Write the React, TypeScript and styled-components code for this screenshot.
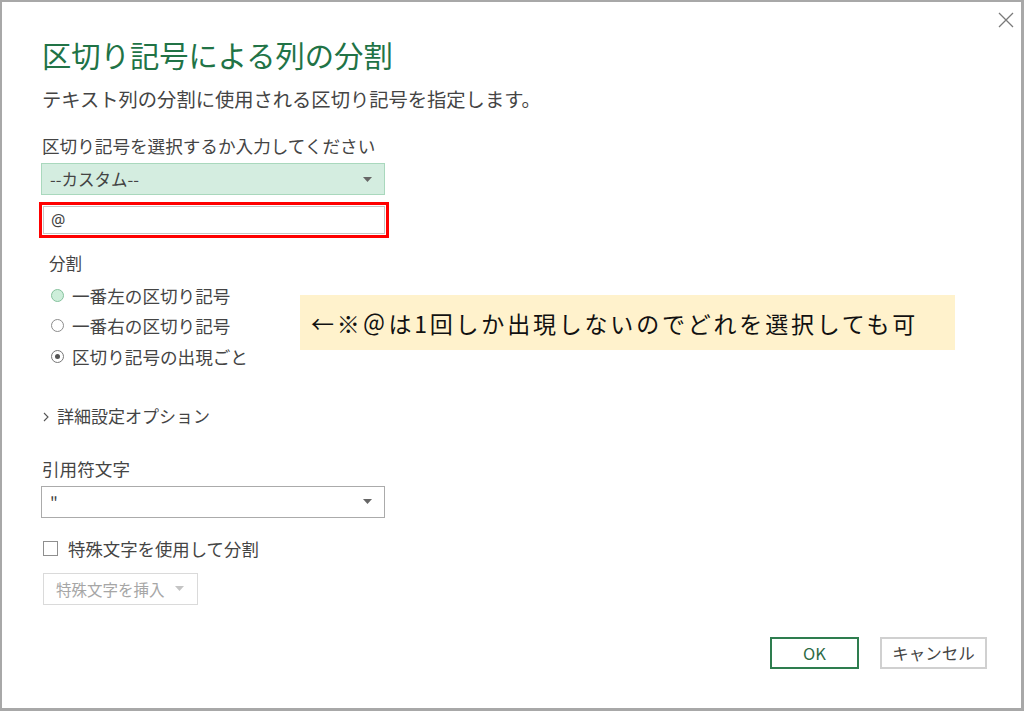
import styled, { createGlobalStyle } from 'styled-components';

const GlobalStyle = createGlobalStyle`
  html, body {
    margin: 0;
    padding: 0;
    background: #ffffff;
  }
  body {
    font-family: 'Noto Sans CJK JP', 'Noto Sans', sans-serif;
    color: #444444;
  }
`;

const FONT = `'Noto Sans CJK JP', 'Noto Sans', sans-serif`;

const ArrowDown = ({ color = '#666666' }: { color?: string }) => (
  <svg width="9" height="5" viewBox="0 0 9 5">
    <path d="M0 0 H9 L4.5 5 Z" fill={color} />
  </svg>
);

export default function App() {
  return (
    <>
      <GlobalStyle />
      <Dialog>
        <CloseButton aria-label="close">
          <svg width="16" height="16" viewBox="0 0 16 16">
            <path d="M1 1 L15 15 M15 1 L1 15" stroke="#7a7a7a" strokeWidth="1.3" fill="none" />
          </svg>
        </CloseButton>

        <Title>区切り記号による列の分割</Title>
        <Subtitle>テキスト列の分割に使用される区切り記号を指定します。</Subtitle>

        <FieldLabel top={28}>区切り記号を選択するか入力してください</FieldLabel>
        <Select variant="active">
          <SelectText>--カスタム--</SelectText>
          <ArrowDown />
        </Select>
        <DelimiterInput readOnly value="@" />

        <GroupLabel>分割</GroupLabel>
        <RadioList>
          <RadioRow>
            <Radio state="hover" />
            一番左の区切り記号
          </RadioRow>
          <RadioRow>
            <Radio state="off" />
            一番右の区切り記号
          </RadioRow>
          <RadioRow>
            <Radio state="on" />
            区切り記号の出現ごと
          </RadioRow>
        </RadioList>

        <Advanced>
          <svg width="6" height="10" viewBox="0 0 6 10">
            <path d="M1 1 L5 5 L1 9" stroke="#555555" strokeWidth="1.1" fill="none" />
          </svg>
          <span>詳細設定オプション</span>
        </Advanced>

        <FieldLabel top={34}>引用符文字</FieldLabel>
        <Select variant="plain">
          <SelectText>"</SelectText>
          <ArrowDown />
        </Select>

        <CheckRow>
          <Checkbox />
          特殊文字を使用して分割
        </CheckRow>

        <InsertButton disabled>
          特殊文字を挿入
          <ArrowDown color="#c4c4c4" />
        </InsertButton>

        <Footer>
          <DialogButton primary>OK</DialogButton>
          <DialogButton>キャンセル</DialogButton>
        </Footer>

        <Note>←※＠は1回しか出現しないのでどれを選択しても可</Note>
      </Dialog>
    </>
  );
}

const Dialog = styled.div`
  position: relative;
  box-sizing: border-box;
  width: 1024px;
  height: 711px;
  border-style: solid;
  border-color: #a8a8a8;
  border-width: 2px 3px 3px 2px;
  background: #ffffff;
  padding: 0 0 0 39px;
  display: flex;
  flex-direction: column;
  align-items: flex-start;
`;

const CloseButton = styled.div`
  position: absolute;
  top: 7px;
  right: 7px;
  width: 16px;
  height: 16px;
`;

const Title = styled.h1`
  margin: 37px 0 0 1px;
  font-family: ${FONT};
  font-weight: 400;
  font-size: 29.3px;
  line-height: 30px;
  color: #217346;
  white-space: nowrap;
`;

const Subtitle = styled.p`
  margin: 20px 0 0 1px;
  font-family: ${FONT};
  font-size: 19.3px;
  line-height: 20px;
  color: #444444;
  white-space: nowrap;
`;

const FieldLabel = styled.div<{ top: number }>`
  margin: ${({ top }) => top}px 0 0 1px;
  font-family: ${FONT};
  font-size: 17.6px;
  line-height: 18px;
  color: #444444;
  white-space: nowrap;
`;

const Select = styled.div<{ variant: 'active' | 'plain' }>`
  box-sizing: border-box;
  margin-top: 8px;
  width: 344px;
  height: 32px;
  display: flex;
  align-items: center;
  justify-content: space-between;
  padding: 0 12px 0 8px;
  background: ${({ variant }) => (variant === 'active' ? '#d4ede0' : '#ffffff')};
  border: 1px solid ${({ variant }) => (variant === 'active' ? '#a9d8bd' : '#ababab')};
`;

const SelectText = styled.span`
  font-family: ${FONT};
  font-size: 16.5px;
  color: #444444;
`;

const DelimiterInput = styled.input`
  box-sizing: border-box;
  margin: 11px 0 0 2px;
  width: 342px;
  height: 28px;
  padding: 0 7px;
  border: 1px solid #c6c6c6;
  outline: 3px solid #ff0000;
  outline-offset: 1px;
  font-family: 'Noto Sans', sans-serif;
  font-size: 16px;
  color: #444444;
  background: #ffffff;
`;

const GroupLabel = styled.div`
  margin: 21px 0 0 8px;
  font-family: ${FONT};
  font-size: 16.5px;
  line-height: 17px;
  color: #444444;
`;

const RadioList = styled.div`
  margin: 8px 0 0 10px;
  display: flex;
  flex-direction: column;
`;

const RadioRow = styled.label`
  height: 30.5px;
  display: flex;
  align-items: center;
  gap: 8px;
  font-family: ${FONT};
  font-size: 17.6px;
  color: #444444;
  white-space: nowrap;
`;

const Radio = styled.span<{ state: 'hover' | 'off' | 'on' }>`
  box-sizing: border-box;
  position: relative;
  width: 13px;
  height: 13px;
  border-radius: 50%;
  border: 1.5px solid
    ${({ state }) => (state === 'hover' ? '#86c29d' : state === 'on' ? '#777777' : '#8c8c8c')};
  background: ${({ state }) => (state === 'hover' ? '#cdeeda' : '#ffffff')};
  &::after {
    content: '';
    display: ${({ state }) => (state === 'on' ? 'block' : 'none')};
    position: absolute;
    left: 50%;
    top: 50%;
    width: 5px;
    height: 5px;
    margin: -2.5px 0 0 -2.5px;
    border-radius: 50%;
    background: #555555;
  }
`;

const Advanced = styled.div`
  margin: 34px 0 0 2px;
  display: flex;
  align-items: center;
  gap: 8px;
  font-family: ${FONT};
  font-size: 17px;
  line-height: 20px;
  color: #444444;
  svg {
    margin-top: 3px;
  }
`;

const CheckRow = styled.label`
  margin: 21px 0 0 2px;
  display: flex;
  align-items: center;
  gap: 10px;
  font-family: ${FONT};
  font-size: 17.4px;
  line-height: 20px;
  color: #444444;
  white-space: nowrap;
`;

const Checkbox = styled.span`
  box-sizing: border-box;
  width: 15px;
  height: 15px;
  border: 1px solid #8f8f8f;
  background: #ffffff;
`;

const InsertButton = styled.button`
  box-sizing: border-box;
  margin: 14px 0 0 2px;
  width: 155px;
  height: 32px;
  display: flex;
  align-items: center;
  gap: 10px;
  padding: 0 0 0 12px;
  border: 1px solid #dadada;
  background: #ffffff;
  font-family: ${FONT};
  font-size: 15.5px;
  color: #a6a6a6;
`;

const Footer = styled.div`
  margin-top: 32px;
  align-self: stretch;
  display: flex;
  justify-content: flex-end;
  gap: 21px;
  padding-right: 34px;
`;

const DialogButton = styled.button<{ primary?: boolean }>`
  box-sizing: border-box;
  width: ${({ primary }) => (primary ? '89px' : '107px')};
  height: 32px;
  padding: 0;
  background: #ffffff;
  border: 2px solid ${({ primary }) => (primary ? '#2e7d4f' : '#d0d0d0')};
  font-family: ${FONT};
  font-size: 16.5px;
  color: ${({ primary }) => (primary ? '#2e6b46' : '#444444')};
`;

const Note = styled.div`
  position: absolute;
  left: 298px;
  top: 293px;
  box-sizing: border-box;
  width: 655px;
  height: 55px;
  display: flex;
  align-items: center;
  padding-left: 11px;
  background: #fff2cc;
  font-family: ${FONT};
  font-size: 23px;
  letter-spacing: 2.8px;
  color: #111111;
  white-space: nowrap;
`;
